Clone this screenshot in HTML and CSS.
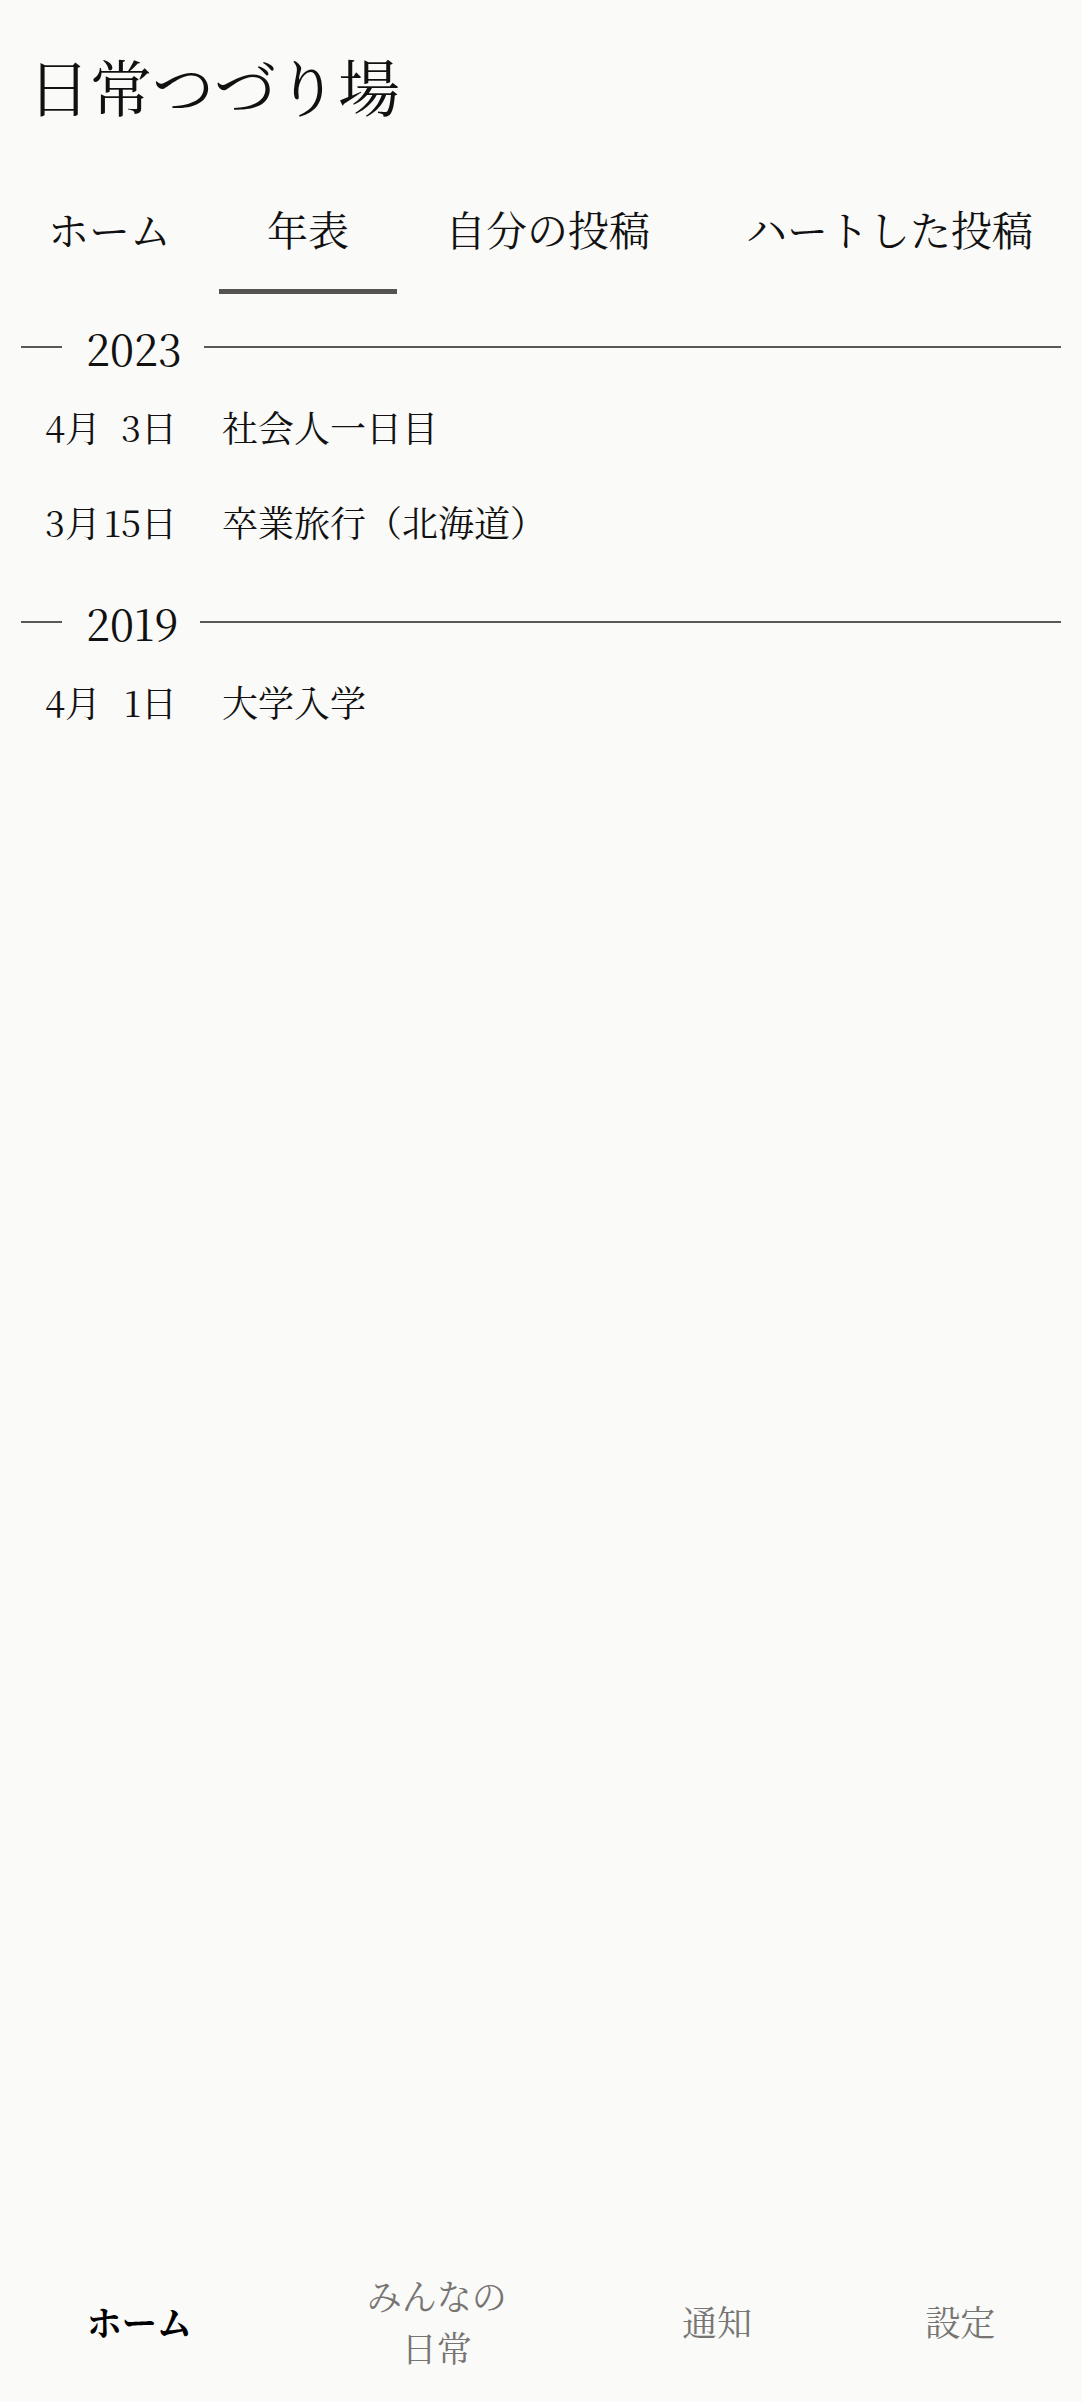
FILE: index.html
```html
<!DOCTYPE html>
<html lang="ja">
<head>
<meta charset="utf-8">
<title>日常つづり場</title>
<link rel="stylesheet" href="styles.css">
</head>
<body>
<div class="app">
  <h1 class="title">日常つづり場</h1>
  <nav class="tabs">
    <div class="tab">ホーム</div>
    <div class="tab active">年表</div>
    <div class="tab">自分の投稿</div>
    <div class="tab">ハートした投稿</div>
  </nav>
  <main class="timeline">
    <section class="year">
      <div class="year-head"><span class="dash"></span><span class="year-label">2023</span><span class="rule"></span></div>
      <div class="entry"><span class="date"><span>4月</span><span>3日</span></span><span class="text">社会人一日目</span></div>
      <div class="entry"><span class="date"><span>3月</span><span>15日</span></span><span class="text">卒業旅行（北海道）</span></div>
    </section>
    <section class="year">
      <div class="year-head"><span class="dash"></span><span class="year-label">2019</span><span class="rule"></span></div>
      <div class="entry"><span class="date"><span>4月</span><span>1日</span></span><span class="text">大学入学</span></div>
    </section>
  </main>
  <footer class="bottom-nav">
    <div class="nav-item active">ホーム</div>
    <div class="nav-item wrap">みんなの日常</div>
    <div class="nav-item">通知</div>
    <div class="nav-item">設定</div>
  </footer>
</div>
</body>
</html>
```
FILE: styles.css
```css
html, body {
  margin: 0;
  padding: 0;
  background: #fafaf8;
}
body {
  font-family: "Noto Serif CJK JP", "IPAMincho", "IPAexMincho", serif;
  color: #111;
}
.app {
  height: 2402px;
  display: flex;
  flex-direction: column;
}
.title {
  margin: 0;
  padding: 46px 0 0 28px;
  font-size: 62px;
  line-height: 80px;
  font-weight: normal;
}
.tabs {
  display: flex;
  margin-top: 73px;
}
.tab {
  padding: 0 48px 30px;
  font-size: 41px;
  line-height: 60px;
  white-space: nowrap;
  border-bottom: 5px solid transparent;
}
.tab.active {
  border-bottom-color: #555350;
}
.timeline {
  flex: 1;
}
.year {
  margin-top: 21px;
}
.year-head {
  display: flex;
  align-items: center;
  height: 64px;
  padding: 0 21px;
}
.dash {
  width: 41px;
  height: 2px;
  background: #5a5856;
}
.year-label {
  font-size: 43px;
  margin: 0 22px 0 24px;
}
.rule {
  flex: 1;
  height: 2px;
  background: #5a5856;
}
.entry {
  display: flex;
  align-items: center;
  height: 95px;
  padding-left: 45px;
  font-size: 36px;
  white-space: nowrap;
}
.date {
  display: flex;
  flex-shrink: 0;
  justify-content: space-between;
  width: 132px;
}
.text {
  margin-left: 45px;
}
.bottom-nav {
  height: 162px;
  display: flex;
  justify-content: space-around;
  align-items: center;
  font-size: 35px;
  line-height: 52px;
}
.nav-item {
  color: #777573;
  text-align: center;
}
.nav-item.active {
  color: #000;
  font-weight: bold;
}
.nav-item.wrap {
  width: 4.1em;
}
```
